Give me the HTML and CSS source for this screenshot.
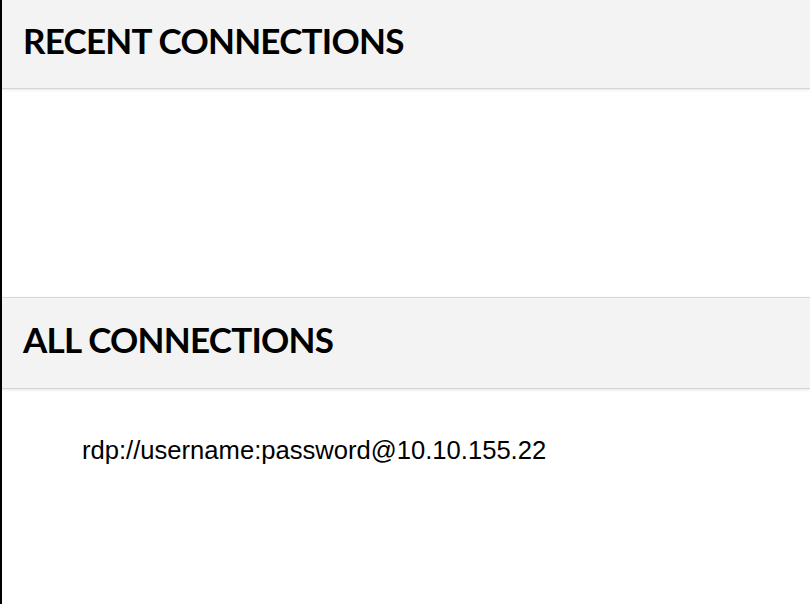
FILE: index.html
```html
<!DOCTYPE html>
<html>
<head>
<meta charset="utf-8">
<link rel="stylesheet" href="styles.css">
</head>
<body>
<div class="page">
  <section class="recent">
    <div class="header">
      <h2>RECENT CONNECTIONS</h2>
    </div>
    <div class="recent-body"></div>
  </section>
  <section class="all">
    <div class="header header-top">
      <h2>ALL CONNECTIONS</h2>
    </div>
    <div class="list">
      <div class="connection">rdp://username:password@10.10.155.22</div>
    </div>
  </section>
</div>
</body>
</html>
```
FILE: styles.css
```css
html, body {
  margin: 0;
  padding: 0;
  background: #fff;
}
.page {
  border-left: 2px solid #000;
  min-height: 604px;
  box-sizing: border-box;
  font-family: "Liberation Sans", Arial, sans-serif;
}
.header {
  background: #f3f3f3;
  border-bottom: 1px solid #d4d4d4;
  box-shadow: 0 1px 3px rgba(0,0,0,0.10);
  height: 89px;
  box-sizing: border-box;
  display: flex;
  align-items: center;
  padding: 0 21px 8px;
}
.header-top {
  border-top: 1px solid #d8d8d8;
  height: 92px;
}
.header h2 {
  margin: 0;
  font-family: Lato, sans-serif;
  font-weight: 700;
  font-size: 35px;
  line-height: 1;
  color: #000;
  letter-spacing: -0.75px;
}
.recent-body {
  height: 208px;
}
.list {
  padding: 47px 0 0 80px;
}
.connection {
  font-size: 25.6px;
  color: #000;
}
```
